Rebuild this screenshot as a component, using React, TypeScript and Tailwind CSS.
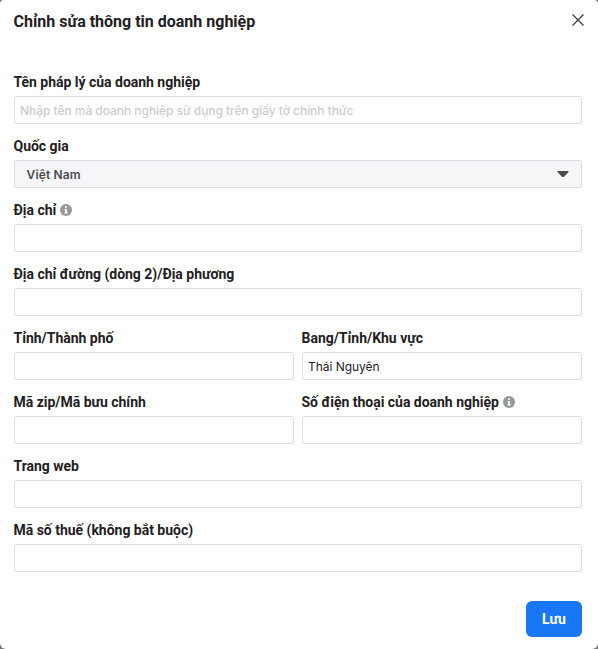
import React from "react";

function Info() {
  return (
    <svg width="12" height="12" viewBox="0 0 12 12" className="ml-1 shrink-0">
      <circle cx="6" cy="6" r="6" fill="#97989b" />
      <path d="M5 2.2h2v1.6H5zM4.5 4.9H7v3.6h.7v1H4.4v-1h.7V5.9h-.6z" fill="#fff" />
    </svg>
  );
}

function Field({ label, info, children }: { label: string; info?: boolean; children?: React.ReactNode }) {
  return (
    <div className="flex h-16 w-full min-w-0 flex-col">
      <div className="-ml-[0.5px] flex h-7 items-center">
        <span className="whitespace-nowrap text-sm leading-7 font-bold tracking-[-0.02px]">{label}</span>
        {info && <Info />}
      </div>
      {children ?? <Box />}
    </div>
  );
}

function Box({ children }: { children?: React.ReactNode }) {
  return (
    <div className="flex h-7 items-center whitespace-nowrap rounded-xs border border-[#dadde1] bg-white px-[5px] pt-px font-[Inter,sans-serif] text-xs">
      {children}
    </div>
  );
}

export default function App() {
  return (
    <div className="h-[649px] w-[598px] bg-[#777]">
      <div className="flex h-full flex-col rounded-t-sm rounded-b-md bg-white pl-3.5 pr-4 font-[Roboto,sans-serif] text-[#1f2022]">
        <header className="flex h-[68px] items-start justify-between">
          <h1 className="-ml-[0.5px] pt-2.5 text-base leading-6 font-bold">Chỉnh sửa thông tin doanh nghiệp</h1>
          <svg width="12" height="12" viewBox="0 0 12 12" className="mt-3.5 -mr-0.5" fill="none" stroke="#444" strokeWidth="1.4">
            <path d="M.5.5l11 11M11.5.5l-11 11" />
          </svg>
        </header>
        <main className="flex flex-col">
          <Field label="Tên pháp lý của doanh nghiệp">
            <Box><span className="font-medium tracking-[-0.04px] text-[#cbccd0]">Nhập tên mà doanh nghiệp sử dụng trên giấy tờ chính thức</span></Box>
          </Field>
          <Field label="Quốc gia">
            <div className="flex h-7 items-center justify-between rounded-xs border border-[#dadde1] bg-[#f5f6f7] pr-3 pl-[11.5px] pt-px font-[Inter,sans-serif] text-xs font-semibold tracking-[0.15px] text-[#4b4c4f]">
              Việt Nam
              <svg width="12" height="7" viewBox="0 0 12 7" className="-mt-px"><path d="M1 0h10q1 0 .5 1L7 5.7q-1 .8-2 0L.5 1Q0 0 1 0" fill="#4b4c4f" /></svg>
            </div>
          </Field>
          <Field label="Địa chỉ" info />
          <Field label="Địa chỉ đường (dòng 2)/Địa phương" />
          <div className="flex gap-2">
            <Field label="Tỉnh/Thành phố" />
            <Field label="Bang/Tỉnh/Khu vực"><Box><span className="tracking-[-0.03px]">Thái Nguyên</span></Box></Field>
          </div>
          <div className="flex gap-2">
            <Field label="Mã zip/Mã bưu chính" />
            <Field label="Số điện thoại của doanh nghiệp" info />
          </div>
          <Field label="Trang web" />
          <Field label="Mã số thuế (không bắt buộc)" />
        </main>
        <footer className="mt-[21px] flex justify-end">
          <button className="h-9 w-14 rounded-md bg-[#1877f2] text-sm font-bold text-white">Lưu</button>
        </footer>
      </div>
    </div>
  );
}
